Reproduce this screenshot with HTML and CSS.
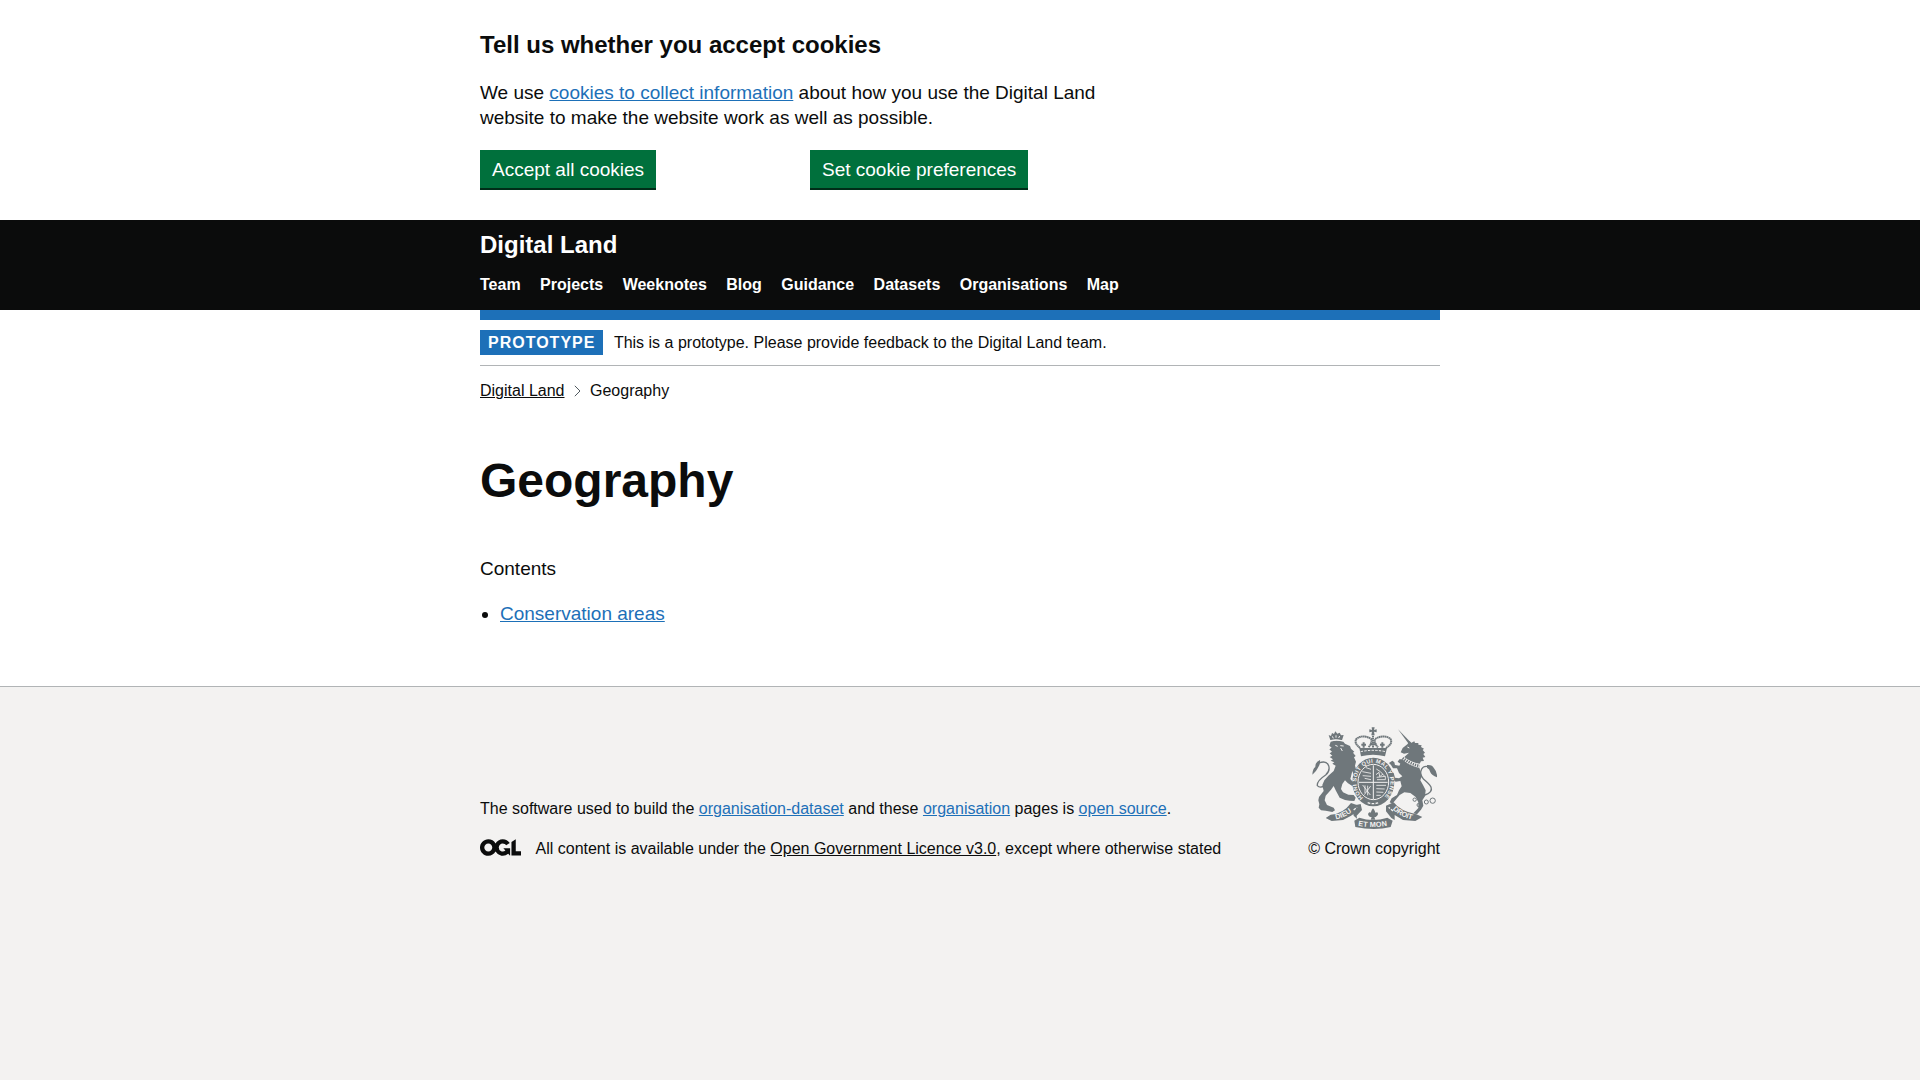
FILE: index.html
```html
<!DOCTYPE html>
<html lang="en">
<head>
<meta charset="utf-8">
<title>Geography | Digital Land</title>
<link rel="stylesheet" href="styles.css">
</head>
<body>
<section class="cookie-banner container">
  <div class="two-thirds">
    <h2 class="cookie-title">Tell us whether you accept cookies</h2>
    <p class="body-text">We use <a class="link" href="#">cookies to collect information</a> about how you use the Digital Land website to make the website work as well as possible.</p>
    <div class="cookie-actions">
      <div><button class="button">Accept all cookies</button></div>
      <div><button class="button">Set cookie preferences</button></div>
    </div>
  </div>
</section>
<header class="header">
  <div class="container">
    <a class="header-logo" href="#">Digital Land</a>
    <nav class="nav">
      <a href="#">Team</a><a href="#">Projects</a><a href="#">Weeknotes</a><a href="#">Blog</a><a href="#">Guidance</a><a href="#">Datasets</a><a href="#">Organisations</a><a href="#">Map</a>
    </nav>
  </div>
</header>
<div class="container">
  <div class="header-bar"></div>
  <div class="phase-banner"><strong class="tag">PROTOTYPE</strong><span>This is a prototype. Please provide feedback to the Digital Land team.</span></div>
  <nav class="breadcrumbs">
    <a href="#">Digital Land</a>
    <svg class="chevron" width="7" height="12" viewBox="0 0 7 12"><path d="M.8.8 6 6 .8 11.2" fill="none" stroke="#505a5f"/></svg>
    <span>Geography</span>
  </nav>
  <main class="main">
    <h1 class="page-title">Geography</h1>
    <p class="body-text">Contents</p>
    <ul class="list"><li><a class="link" href="#">Conservation areas</a></li></ul>
  </main>
</div>
<footer class="footer">
  <div class="container footer-row">
    <div>
      <p class="footer-software">The software used to build the <a class="link" href="#">organisation-dataset</a> and these <a class="link" href="#">organisation</a> pages is <a class="link" href="#">open source</a>.</p>
      <div class="licence">
        <svg class="ogl" viewBox="0 0 483.2 195.7" width="41" height="17"><path fill="currentColor" d="M421.5 142.8V.1l-50.7 32.3v161.1h112.4v-50.7zm-122.3-9.6A47.12 47.12 0 0 1 221 97.8c0-26 21.1-47.1 47.1-47.1 16.7 0 31.4 8.7 39.7 21.8l42.7-27.2A97.63 97.63 0 0 0 268.1 0c-36.5 0-68.3 20.1-85.1 49.7A98 98 0 0 0 97.8 0C43.9 0 0 43.9 0 97.8s43.9 97.8 97.8 97.8c36.5 0 68.3-20.1 85.1-49.7a97.76 97.76 0 0 0 149.6 25.4l19.4 22.2h3v-87.8h-80l24.3 27.5zM97.8 145c-26 0-47.1-21.1-47.1-47.1s21.1-47.1 47.1-47.1 47.1 21.1 47.1 47.1S123.8 145 97.8 145"/></svg>
        <span>All content is available under the <a class="dark-link" href="#">Open Government Licence v3.0</a>, except where otherwise stated</span>
      </div>
    </div>
    <a class="copyright" href="#">
      <svg class="crest" width="125" height="102" viewBox="35 36 375 306">
        <defs>
          <path id="garter" d="M189 248A51 58 0 1 1 249 248"/>
          <path id="ribbon-left" d="M107 313Q136 307 160 286"/>
          <path id="ribbon-mid" d="M173 332Q218 341 266 331"/>
          <path id="ribbon-right" d="M277 283Q302 307 340 315"/>
        </defs>
        <g fill="#6f777b">
          <!-- lion -->
          <path d="M90 75 85 60 92 63 95 54 101 57 105 49 111 56 118 53 122 61 130 60 125 76Q106 71 90 75z"/>
          <path d="M91 80Q108 74 129 80L134 86 149 93 152 101 162 110 158 113 166 123 161 127 167 140 164 152 168 166 160 180 156 168 150 192 160 204 157 214 143 205 134 196 126 207 122 222 128 232 144 239 160 240 166 248 162 258 148 257 134 255 118 248 106 226 100 213 92 224 76 242 73 256 80 270 100 278 104 286 96 291 76 287 62 286 55 278 57 268 54 256 56 246 70 228 66 210 72 196 84 182 100 168 106 152 96 146 102 142 91 137 98 133 88 126 96 122 88 115 95 110 87 103 94 98 87 92z"/>
          <path d="M36 179q1-18 9-23-1-15 14-21 2 13-7 25-4 10-16 19z"/>
          <path d="M56 144q22-9 29 8 5 16-9 28-27 18-25 32 8 9 22 0" fill="none" stroke="#6f777b" stroke-width="4"/>
          <!-- unicorn -->
          <path d="M293 43 333 84 327 89z"/>
          <path d="M301 112 307 99 321 88 328 78 332 84 342 79 344 84 354 84 354 89 364 91 362 96 371 101 367 105 374 113 369 117 375 126 367 128 371 138 362 139 358 146Q330 142 312 126L326 113 311 116z"/>
          <path d="M306 133Q330 155 357 158L361 170 364 184 360 196 368 210 376 226 374 244 366 256 369 272 362 284 350 298 339 295 354 279 354 262 346 246 330 234 312 232 298 240 288 252 276 266 268 262 274 250 290 240 296 226 304 214 300 198 286 200 276 192 272 180 263 174 272 169 280 174 284 188 296 190 306 184 296 174 290 160 278 160 272 150 266 144 276 137 282 142 284 150 297 152 300 146 292 140 297 133z"/>
          <path d="M374 240Q398 232 392 216 386 206 370 193 356 178 364 162 370 151 384 155 396 158 402 170" fill="none" stroke="#6f777b" stroke-width="4"/>
          <path d="M380 150Q396 148 401 160 409 168 411 187 394 182 390 172 388 161 380 158z"/>
          <!-- crown -->
          <path d="M214 37h9l-2 8 8-2v9l-8-2 2 11h-10l2-11-8 2v-9l8 2zM177 99l83 0-6 25q-36-9-72 0z"/>
          <!-- garter -->
          <ellipse cx="219" cy="201" rx="63" ry="73"/>
          <!-- ribbons -->
          <path d="M91 299q37-2 61-35l24 8-13 23-12 8-23 12-34 3-18-9zM156 272l25-5 4 18-16 17 1 9-10-9zM162 317l15-9q40 14 84 0l16 9-6 19q-48 12-106 0zM257 272l23-10q20 27 68 36l18 8-21 12-37-3-25-15 0 15-10-6-16-20z"/>
        </g>
        <g fill="none" stroke="#6f777b">
          <path d="M179 99q-20-16-10-28 19-14 44 1 3 13-9 25M257 99q22-14 13-28-20-14-46 1-3 13 9 25M218 62v38" stroke-width="6" stroke-dasharray="5 1"/>
          <path d="M190 98V82m-7 7h14M246 98V82m-7 7h14M209 88h19" stroke-width="6"/>
          <circle cx="343" cy="254" r="5" stroke-width="3"/><circle cx="355" cy="270" r="5" stroke-width="3"/><circle cx="378" cy="261" r="6" stroke-width="3"/><circle cx="397" cy="257" r="8" stroke-width="3"/>
        </g>
        <g fill="none" stroke="#f3f2f1">
          <ellipse cx="219" cy="201" rx="46" ry="53" stroke-width="3"/>
          <path d="M90 77q17-5 37 0M96 64l3 6m8-9v7m11-5-3 6M105 91l7 3m8-2 10 1m-9 6 5 9" stroke-width="3"/>
          <path d="M181 110q37-8 75 0" stroke-width="3" stroke-dasharray="7 4"/>
          <path d="M219 151v101M176 202h86" stroke-width="3"/>
          <path d="M186 170l26 5m-25 7 25 2m-19 6 19 4m-15-36 15 5M187 210l23 30m-16-29v23m8-22v29m9-28-19 26M228 162q12 5 25 22M227 179l9-7 2 13 10-8M229 187l26-3v10h-25M228 211h29m-29 10 25 1m-25 9 21 1m-21 9h13" stroke-width="2.5"/>
          <path d="M321 96l6 3M315 132q20 14 41 17" stroke-width="3"/>
          <path d="M202 263q17 6 34 0M160 285l10-8M278 288l-13-11" stroke-width="4" stroke-dasharray="8 4"/>
        </g>
        <path d="M307 129q22 18 51 24" fill="none" stroke="#6f777b" stroke-width="8" stroke-dasharray="4 3"/>
        <path d="M218 280q12 13 3 22 0-10 10-10 6 7-5 14l-4 1 3 7h-14l3-7-6-2q-9-7-1-13 9 0 8 10-8-9 3-22z" fill="#6f777b"/>
        <g class="motto">
          <text><textPath href="#garter" textLength="272" lengthAdjust="spacing">HONI SOIT QUI MAL Y PENSE</textPath></text>
          <text class="motto-large"><textPath href="#ribbon-left">DIEU</textPath></text>
          <text class="motto-large"><textPath href="#ribbon-mid" textLength="88">ET MON</textPath></text>
          <text class="motto-large"><textPath href="#ribbon-right" textLength="66">DROIT</textPath></text>
        </g>
      </svg>
      <span>© Crown copyright</span>
    </a>
  </div>
</footer>
</body>
</html>
```
FILE: styles.css
```css
* { box-sizing: border-box; }
html { background: #f3f2f1; }
body { margin: 0; min-height: 1080px; background: #fff; color: #0b0c0c; font: 16px/20px "Liberation Sans", Arial, sans-serif; display: flex; flex-direction: column; }
.container { width: 960px; margin: 0 auto; }
.cookie-banner { height: 220px; padding-top: 30px; }
.two-thirds { width: 660px; padding-right: 30px; }
.cookie-title { margin: 0 0 20px; font-size: 24px; line-height: 30px; }
.body-text { margin: 0 0 20px; font-size: 19px; line-height: 25px; }
.link { color: #1d70b8; }
.cookie-actions { display: grid; grid-template-columns: 300px 300px; gap: 30px; }
.button { display: block; height: 38px; padding: 1px 12px 0; border: 0; background: #00703c; box-shadow: 0 2px 0 #002d18; color: #fff; font: 19px/37px "Liberation Sans", Arial, sans-serif; }
.header { height: 90px; padding-top: 10px; background: #0b0c0c; }
.header a { color: #fff; text-decoration: none; font-weight: bold; }
.header-logo { display: block; font-size: 24px; line-height: 30px; }
.nav { display: flex; gap: 19.45px; margin-top: 15px; }
.header-bar { height: 10px; background: #1d70b8; }
.phase-banner { display: flex; align-items: center; gap: 10.5px; height: 46px; padding: 10px 0; border-bottom: 1px solid #b1b4b6; }
.tag { height: 25px; padding: 0 8px; background: #1d70b8; color: #fff; line-height: 25px; letter-spacing: 1px; }
.breadcrumbs { display: flex; align-items: center; margin-top: 15px; }
.breadcrumbs a, .dark-link { color: #0b0c0c; }
.chevron { margin: 0 9px 0 9.5px; }
.main { height: 285px; padding-top: 55px; }
.page-title { margin: 0 0 50px; font-size: 48px; line-height: 50px; }
.list { margin: 0; padding-left: 20px; font-size: 19px; line-height: 25px; }
.footer { flex: 1; padding-top: 40px; border-top: 1px solid #b1b4b6; background: #f3f2f1; }
.footer-row { display: flex; justify-content: space-between; align-items: flex-end; }
.footer-software { margin: 0 0 20px; }
.licence { display: flex; align-items: flex-start; }
.ogl { margin-right: 14.5px; }
.copyright { display: flex; flex-direction: column; align-items: center; color: #0b0c0c; text-decoration: none; }
.crest { display: block; margin-bottom: 10px; }
.motto { fill: #f3f2f1; font-size: 17px; font-weight: bold; }
.motto-large { font-size: 22px; }
```
